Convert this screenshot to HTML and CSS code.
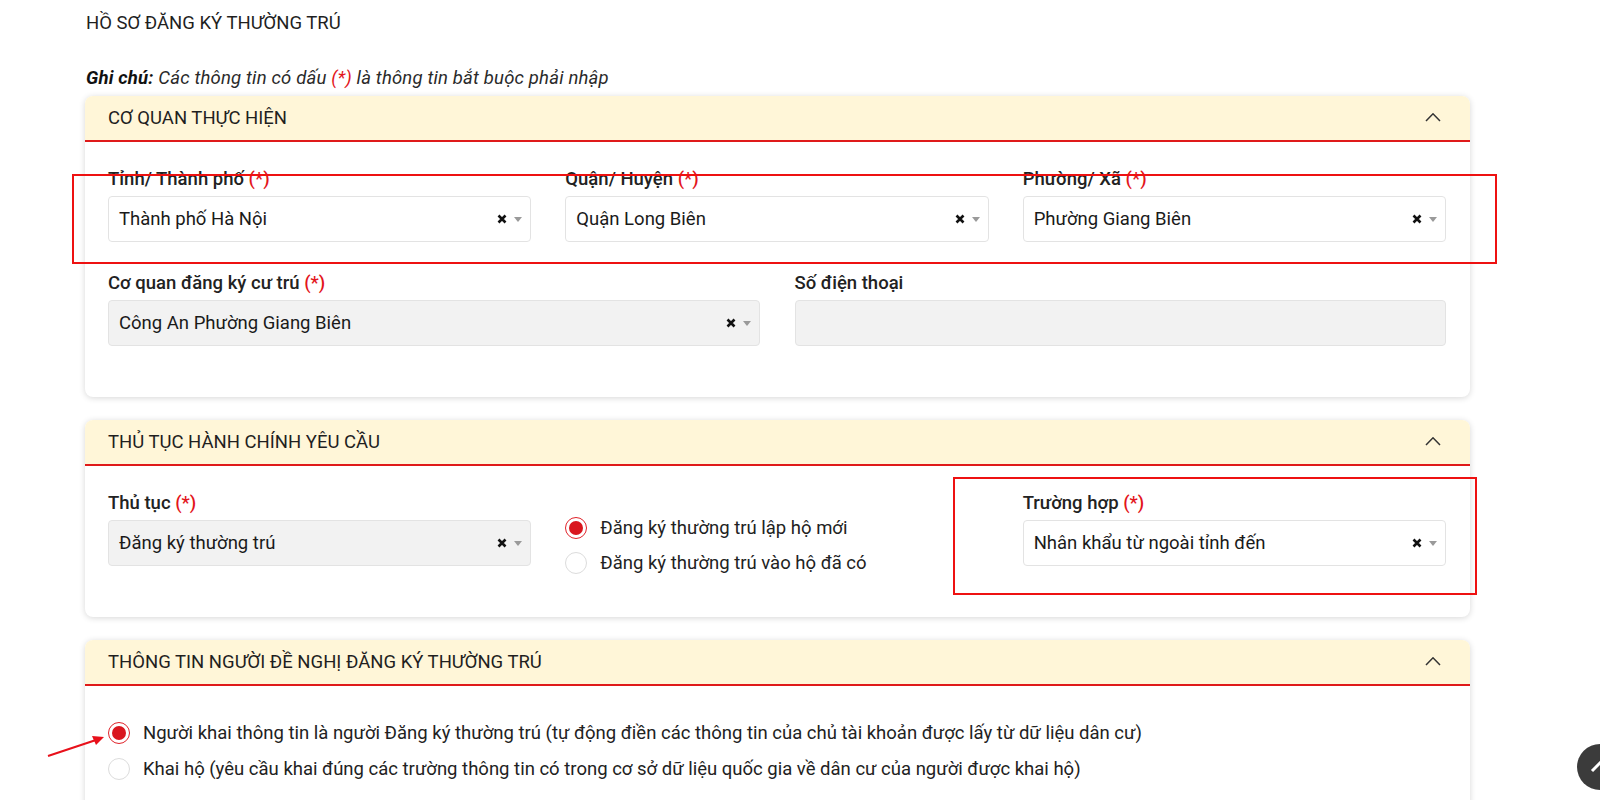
FILE: index.html
```html
<!DOCTYPE html>
<html lang="vi">
<head>
<meta charset="utf-8">
<title>Hồ sơ đăng ký thường trú</title>
<link rel="stylesheet" href="styles.css">
</head>
<body>
<div class="page">
  <h1 class="title">HỒ SƠ ĐĂNG KÝ THƯỜNG TRÚ</h1>
  <p class="note"><b>Ghi chú:</b> Các thông tin có dấu <span class="req">(*)</span> là thông tin bắt buộc phải nhập</p>

  <section class="card">
    <div class="card-head">
      <span>CƠ QUAN THỰC HIỆN</span>
      <svg class="chev" width="16" height="10" viewBox="0 0 16 10"><path d="M1 9 L8 1.8 L15 9" fill="none" stroke="#333" stroke-width="1.5"/></svg>
    </div>
    <div class="card-body">
      <div class="row row3">
        <div class="field">
          <label class="lbl">Tỉnh/ Thành phố <span class="req">(*)</span></label>
          <div class="select"><span class="val">Thành phố Hà Nội</span><svg class="clr" width="10" height="10" viewBox="0 0 10 10"><path d="M1.5 1.5 L8.5 8.5 M8.5 1.5 L1.5 8.5" stroke="#111" stroke-width="2.6"/></svg><span class="caret"></span></div>
        </div>
        <div class="field">
          <label class="lbl">Quận/ Huyện <span class="req">(*)</span></label>
          <div class="select"><span class="val">Quận Long Biên</span><svg class="clr" width="10" height="10" viewBox="0 0 10 10"><path d="M1.5 1.5 L8.5 8.5 M8.5 1.5 L1.5 8.5" stroke="#111" stroke-width="2.6"/></svg><span class="caret"></span></div>
        </div>
        <div class="field">
          <label class="lbl">Phường/ Xã <span class="req">(*)</span></label>
          <div class="select"><span class="val">Phường Giang Biên</span><svg class="clr" width="10" height="10" viewBox="0 0 10 10"><path d="M1.5 1.5 L8.5 8.5 M8.5 1.5 L1.5 8.5" stroke="#111" stroke-width="2.6"/></svg><span class="caret"></span></div>
        </div>
      </div>
      <div class="row row2">
        <div class="field">
          <label class="lbl">Cơ quan đăng ký cư trú <span class="req">(*)</span></label>
          <div class="select disabled"><span class="val">Công An Phường Giang Biên</span><svg class="clr" width="10" height="10" viewBox="0 0 10 10"><path d="M1.5 1.5 L8.5 8.5 M8.5 1.5 L1.5 8.5" stroke="#111" stroke-width="2.6"/></svg><span class="caret"></span></div>
        </div>
        <div class="field">
          <label class="lbl">Số điện thoại</label>
          <div class="select disabled"></div>
        </div>
      </div>
    </div>
  </section>

  <section class="card">
    <div class="card-head">
      <span>THỦ TỤC HÀNH CHÍNH YÊU CẦU</span>
      <svg class="chev" width="16" height="10" viewBox="0 0 16 10"><path d="M1 9 L8 1.8 L15 9" fill="none" stroke="#333" stroke-width="1.5"/></svg>
    </div>
    <div class="card-body">
      <div class="row row3">
        <div class="field">
          <label class="lbl">Thủ tục <span class="req">(*)</span></label>
          <div class="select disabled"><span class="val">Đăng ký thường trú</span><svg class="clr" width="10" height="10" viewBox="0 0 10 10"><path d="M1.5 1.5 L8.5 8.5 M8.5 1.5 L1.5 8.5" stroke="#111" stroke-width="2.6"/></svg><span class="caret"></span></div>
        </div>
        <div class="radios radios-sm">
          <div class="radio-row"><span class="radio on"></span><span>Đăng ký thường trú lập hộ mới</span></div>
          <div class="radio-row"><span class="radio"></span><span>Đăng ký thường trú vào hộ đã có</span></div>
        </div>
        <div class="field">
          <label class="lbl">Trường hợp <span class="req">(*)</span></label>
          <div class="select"><span class="val">Nhân khẩu từ ngoài tỉnh đến</span><svg class="clr" width="10" height="10" viewBox="0 0 10 10"><path d="M1.5 1.5 L8.5 8.5 M8.5 1.5 L1.5 8.5" stroke="#111" stroke-width="2.6"/></svg><span class="caret"></span></div>
        </div>
      </div>
    </div>
  </section>

  <section class="card">
    <div class="card-head">
      <span>THÔNG TIN NGƯỜI ĐỀ NGHỊ ĐĂNG KÝ THƯỜNG TRÚ</span>
      <svg class="chev" width="16" height="10" viewBox="0 0 16 10"><path d="M1 9 L8 1.8 L15 9" fill="none" stroke="#333" stroke-width="1.5"/></svg>
    </div>
    <div class="card-body body-long">
      <div class="radios radios-lg">
        <div class="radio-row"><span class="radio on"></span><span>Người khai thông tin là người Đăng ký thường trú (tự động điền các thông tin của chủ tài khoản được lấy từ dữ liệu dân cư)</span></div>
        <div class="radio-row"><span class="radio"></span><span>Khai hộ (yêu cầu khai đúng các trường thông tin có trong cơ sở dữ liệu quốc gia về dân cư của người được khai hộ)</span></div>
      </div>
    </div>
  </section>
</div>

<div class="mark mark-1"></div>
<div class="mark mark-2"></div>
<svg class="arrow" width="70" height="40" viewBox="0 0 70 40"><path d="M8 31 L56 15" stroke="#e8101a" stroke-width="2"/><path d="M64 12 L52 11 L56 20 Z" fill="#e8101a"/></svg>

<div class="to-top"><svg width="20" height="12" viewBox="0 0 20 12"><path d="M2 10 L10 2 L18 10" fill="none" stroke="#fff" stroke-width="3"/></svg></div>
</body>
</html>
```

FILE: styles.css
```css
html, body {
  margin: 0;
  padding: 0;
  height: 800px;
  overflow: hidden;
  background: #fff;
}
body {
  position: relative;
  font-family: Roboto, "Noto Sans", sans-serif;
  font-size: 18.5px;
  color: #222;
}
.page {
  padding: 13px 0 0 85px;
  width: 1385px;
}
.title {
  margin: 0 0 34px 1px;
  font-size: 18.5px;
  font-weight: 400;
  line-height: 21px;
  color: #1f1f1f;
}
.note {
  margin: 0 0 7px 1px;
  font-style: italic;
  line-height: 21px;
  font-size: 18.5px;
  letter-spacing: 0.18px;
  color: #2a2a2a;
}
.note b { font-weight: 700; color: #111; }
.req { color: #e3151b; }

.card {
  background: #fff;
  border-radius: 8px;
  box-shadow: 0 1px 6px rgba(0,0,0,0.16);
  margin-bottom: 23px;
  overflow: hidden;
}
.card-head {
  height: 44px;
  background: #fff6d8;
  border-bottom: 2px solid #df1a1a;
  display: flex;
  align-items: center;
  justify-content: space-between;
  padding: 0 29px 0 23px;
  color: #1f1f1f;
}
.chev { display: block; margin-top: -2px; }
.card-body {
  padding: 26px 24px 51px 23px;
  display: flex;
  flex-direction: column;
  gap: 30px;
}
.body-long { padding: 29px 24px 200px 23px; }
.row { display: grid; column-gap: 34px; align-items: start; }
.row3 { grid-template-columns: repeat(3, 1fr); }
.row2 { grid-template-columns: repeat(2, 1fr); column-gap: 35px; }

.lbl {
  display: block;
  line-height: 22px;
  margin-bottom: 6px;
  font-weight: 500;
  color: #222;
}
.select {
  height: 46px;
  box-sizing: border-box;
  border: 1px solid #e3e3e3;
  border-radius: 4px;
  background: #fff;
  display: flex;
  align-items: center;
  padding: 0 8px 0 10px;
}
.select.disabled { background: #f2f2f2; }
.val { flex: 1; color: #1a1a1a; }
.clr { display: block; margin-right: 7px; }
.caret {
  width: 0;
  height: 0;
  border-left: 4px solid transparent;
  border-right: 4px solid transparent;
  border-top: 5px solid #9a9a9a;
}

.radios { display: flex; flex-direction: column; }
.radios-sm { padding-top: 18px; height: 74px; box-sizing: border-box; }
.radios-sm .radio-row { height: 35px; flex: none; }
.radios-lg .radio-row { height: 36px; }
.radio-row {
  display: flex;
  align-items: center;
  gap: 13px;
  color: #222;
}
.radio {
  width: 22px;
  height: 22px;
  box-sizing: border-box;
  border-radius: 50%;
  border: 1px solid #dcdcdc;
  background: #fff;
  flex: none;
  position: relative;
}
.radio.on { border-color: #e0232a; }
.radio.on::after {
  content: "";
  position: absolute;
  left: 3px;
  top: 3px;
  width: 14px;
  height: 14px;
  border-radius: 50%;
  background: #d9161e;
}

.mark {
  position: absolute;
  border: 2px solid #ee1111;
  box-sizing: border-box;
}
.mark-1 { left: 72px; top: 174px; width: 1425px; height: 90px; }
.mark-2 { left: 953px; top: 477px; width: 524px; height: 118px; }
.arrow { position: absolute; left: 40px; top: 725px; }

.to-top {
  position: absolute;
  left: 1577px;
  top: 744px;
  width: 46px;
  height: 46px;
  border-radius: 50%;
  background: #3b3b3b;
  display: flex;
  align-items: center;
  justify-content: center;
}
```
